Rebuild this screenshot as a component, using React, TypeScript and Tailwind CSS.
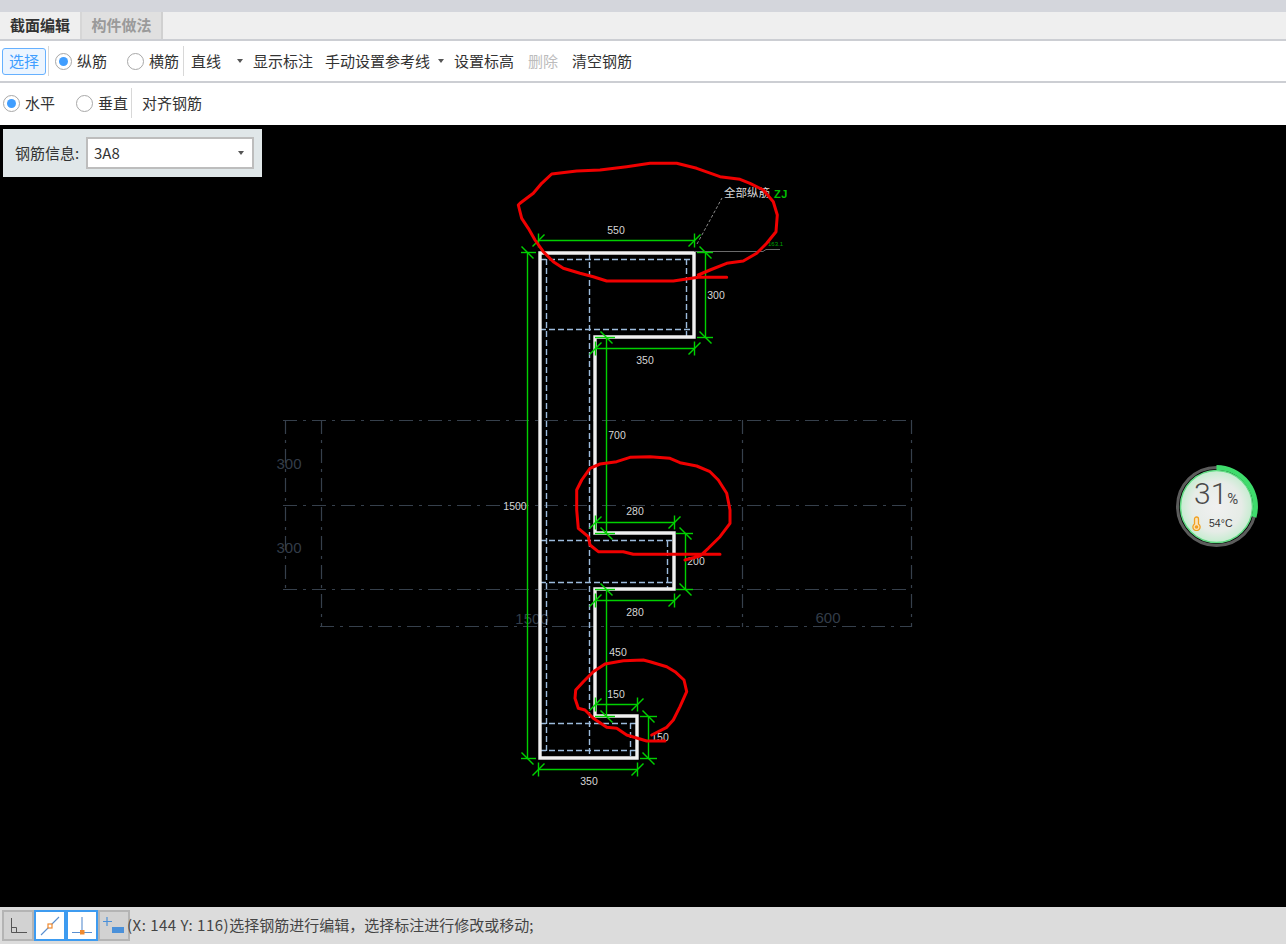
import React from 'react';

const font = { fontFamily: '"Liberation Sans", sans-serif' };

type Pt = [number, number];

// scribbles were traced from 3x crops, so points are crop-space and get mapped back
const mapPts = (pts: Pt[], ox: number, oy: number) =>
  pts.map(([x, y]) => `${(ox + x / 3).toFixed(1)},${(oy + y / 3).toFixed(1)}`).join(' ');

const scribbleTop: Pt[] = [
  [650, 367], [565, 367], [490, 378], [400, 378], [290, 378], [250, 365], [210, 355], [160, 340], [130, 320], [100, 290],
  [75, 255], [55, 220], [35, 190], [25, 150], [30, 145], [70, 115], [95, 85], [125, 57], [200, 48], [270, 45], [350, 35],
  [420, 25], [500, 25], [560, 40], [630, 65], [690, 73], [720, 85], [760, 105], [790, 140], [802, 180], [798, 230],
  [770, 265], [740, 295], [700, 318], [650, 325], [600, 345], [565, 360],
];
const scribbleMid: Pt[] = [
  [555, 330], [600, 318], [625, 295], [660, 260], [690, 220], [690, 180], [680, 130], [655, 90], [630, 65], [590, 48],
  [540, 38], [510, 25], [450, 20], [390, 22], [350, 35], [300, 42], [270, 55], [245, 90], [230, 120], [230, 180],
  [235, 235], [265, 260], [270, 285], [295, 305], [370, 305], [400, 313], [660, 313],
];
const scribbleLow: Pt[] = [
  [425, 285], [470, 262], [490, 240], [510, 200], [530, 155], [522, 120], [495, 95], [470, 80], [420, 65], [400, 60],
  [340, 62], [285, 72], [250, 95], [220, 125], [197, 150], [195, 175], [205, 205], [225, 210], [250, 235], [290, 262],
  [320, 265], [350, 285], [410, 303], [465, 303],
];

const gridH = [
  { y: 420.5, x1: 283, x2: 911 },
  { y: 505.5, x1: 283, x2: 911 },
  { y: 589.5, x1: 283, x2: 911 },
  { y: 626.5, x1: 320, x2: 911 },
];
const gridV = [
  { x: 285.5, y1: 420, y2: 590 },
  { x: 321.5, y1: 420, y2: 627 },
  { x: 742.5, y1: 420, y2: 627 },
  { x: 911.5, y1: 420, y2: 627 },
];
const gridLabels = [
  { t: '300', x: 289, y: 469 },
  { t: '300', x: 289, y: 553 },
  { t: '1500', x: 532, y: 624 },
  { t: '600', x: 828, y: 623 },
];

const stirrups: [number, number, number, number][] = [
  [540, 259.5, 694, 259.5],
  [546.5, 259, 546.5, 751],
  [589.5, 253, 589.5, 758],
  [686.5, 259, 686.5, 337],
  [540, 329.5, 694, 329.5],
  [540, 540.5, 674, 540.5],
  [667.5, 541, 667.5, 590],
  [540, 582.5, 674, 582.5],
  [540, 723.5, 637, 723.5],
  [630.5, 723, 630.5, 758],
  [540, 750.5, 637, 750.5],
];

const hDims = [
  { y: 240.5, x1: 538.5, x2: 694.5 },
  { y: 348.5, x1: 595.5, x2: 694.5 },
  { y: 522.5, x1: 595.5, x2: 674.5 },
  { y: 600.5, x1: 595.5, x2: 674.5 },
  { y: 704.5, x1: 595.5, x2: 637.5 },
  { y: 769.5, x1: 538.5, x2: 637.5 },
];
const vDims = [
  { x: 527.5, y1: 252.5, y2: 758.5, e1: 521, e2: 536 },
  { x: 705.5, y1: 252.5, y2: 337.5, e1: 697, e2: 713 },
  { x: 606.5, y1: 337.5, y2: 533.5, e1: 595, e2: 615 },
  { x: 685.5, y1: 533.5, y2: 589.5, e1: 676, e2: 693 },
  { x: 606.5, y1: 589.5, y2: 716.5, e1: 595, e2: 615 },
  { x: 648.5, y1: 716.5, y2: 758.5, e1: 640, e2: 657 },
];
const dimLabels = [
  { t: '550', x: 616, y: 234 },
  { t: '300', x: 716, y: 299 },
  { t: '350', x: 645, y: 364 },
  { t: '700', x: 617, y: 439 },
  { t: '280', x: 635, y: 515 },
  { t: '200', x: 696, y: 565 },
  { t: '280', x: 635, y: 616 },
  { t: '450', x: 618, y: 656 },
  { t: '150', x: 616, y: 698 },
  { t: '150', x: 660, y: 741 },
  { t: '350', x: 589, y: 785 },
  { t: '1500', x: 515, y: 510 },
];

function Drawing() {
  return (
    <svg className="block w-full h-full" viewBox="0 125 1286 782" style={font}>
      <g stroke="#36404c" strokeWidth="1.2" strokeDasharray="14 6 3 6" fill="none">
        {gridH.map((l) => (
          <line key={l.y} x1={l.x1} x2={l.x2} y1={l.y} y2={l.y} />
        ))}
        {gridV.map((l) => (
          <line key={l.x} x1={l.x} x2={l.x} y1={l.y1} y2={l.y2} />
        ))}
      </g>
      {gridLabels.map((l) => (
        <text key={l.t + l.y} x={l.x} y={l.y} fontSize="15" fill="#333d49" textAnchor="middle">
          {l.t}
        </text>
      ))}

      <g stroke="#9cbbdc" strokeWidth="1.4" strokeDasharray="6 3">
        {stirrups.map(([x1, y1, x2, y2]) => (
          <line key={`${x1}-${y1}-${x2}`} x1={x1} y1={y1} x2={x2} y2={y2} />
        ))}
      </g>

      <path
        d="M540 253H694V337H595V533H674V589H595V716H637V758H540Z"
        fill="none"
        stroke="#f0f0f0"
        strokeWidth="3.4"
      />

      <line x1="694" y1="251.5" x2="763" y2="251.5" stroke="#6a6a6a" strokeWidth="1" />
      <path d="M763 251.5L766 249.5H780" fill="none" stroke="#6a6a6a" strokeWidth="1" />
      <line x1="697" y1="244" x2="722" y2="198" stroke="#8a8a8a" strokeWidth="1" strokeDasharray="3 2" />

      <g stroke="#00d000" strokeWidth="1.4">
        {hDims.map((d) => (
          <g key={d.y}>
            <line x1={d.x1} x2={d.x2} y1={d.y} y2={d.y} />
            <line x1={d.x1} x2={d.x1} y1={d.y - 7} y2={d.y + 7} />
            <line x1={d.x2} x2={d.x2} y1={d.y - 7} y2={d.y + 7} />
            <line x1={d.x1 - 6} y1={d.y + 6} x2={d.x1 + 6} y2={d.y - 6} />
            <line x1={d.x2 - 6} y1={d.y + 6} x2={d.x2 + 6} y2={d.y - 6} />
          </g>
        ))}
        {vDims.map((d) => (
          <g key={d.y1}>
            <line x1={d.x} x2={d.x} y1={d.y1} y2={d.y2} />
            <line x1={d.e1} x2={d.e2} y1={d.y1} y2={d.y1} />
            <line x1={d.e1} x2={d.e2} y1={d.y2} y2={d.y2} />
            <line x1={d.x - 6} y1={d.y1 - 6} x2={d.x + 6} y2={d.y1 + 6} />
            <line x1={d.x - 6} y1={d.y2 - 6} x2={d.x + 6} y2={d.y2 + 6} />
          </g>
        ))}
      </g>

      {dimLabels.map((l) => (
        <text key={l.t + l.x} x={l.x} y={l.y} fontSize="10.5" fill="#d6d6d6" textAnchor="middle">
          {l.t}
        </text>
      ))}

      <text x="724" y="197" fontSize="11.5" fill="#d8d8d8" style={{ fontFamily: '"Noto Sans CJK SC", sans-serif' }}>
        全部纵筋
      </text>
      <text x="774" y="198" fontSize="11" fontWeight="bold" fill="#00c000" letterSpacing="0.5">
        ZJ
      </text>
      <text x="768" y="246" fontSize="6" fill="#00a000">
        163.1
      </text>

      <g fill="none" stroke="#f00000" strokeWidth="3" strokeLinejoin="round" strokeLinecap="round">
        <polyline points={mapPts(scribbleTop, 510, 155)} />
        <polyline points={mapPts(scribbleMid, 500, 450)} />
        <polyline points={mapPts(scribbleLow, 510, 640)} />
      </g>
    </svg>
  );
}

function Radio({ checked, label }: { checked?: boolean; label: string }) {
  return (
    <span className="flex items-center gap-[5px]">
      <span className="w-[17px] h-[17px] rounded-full border border-[#a8a8a8] bg-white flex items-center justify-center">
        {checked && <span className="w-[9px] h-[9px] rounded-full bg-[#409eff]" />}
      </span>
      <span className="text-[15px] text-[#333]">{label}</span>
    </span>
  );
}

function Caret() {
  return <span className="block w-0 h-0 border-x-[3px] border-x-transparent border-t-[4px] border-t-[#555]" />;
}

function Gauge() {
  return (
    <div className="absolute left-[1175px] top-[340px] w-[84px] h-[84px]">
      <svg className="absolute inset-0" width="84" height="84" viewBox="0 0 84 84">
        <defs>
          <radialGradient id="gaugeFill">
            <stop offset="0%" stopColor="#f0f0f0" />
            <stop offset="70%" stopColor="#e6ece7" />
            <stop offset="100%" stopColor="#c6ecd0" />
          </radialGradient>
        </defs>
        <circle cx="41.5" cy="41.5" r="36" fill="url(#gaugeFill)" stroke="#62dd85" strokeWidth="1.5" />
        <circle cx="41.5" cy="41.5" r="39" fill="none" stroke="#5c5c5c" strokeWidth="3" />
        <path d="M41.5 2.5A39 39 0 0 1 79 52" fill="none" stroke="#3fdc6c" strokeWidth="5" />
      </svg>
      <div
        className="absolute left-[19px] top-[11px] flex items-baseline text-[#4a4a4a]"
        style={{ fontFamily: 'Roboto, sans-serif' }}
      >
        <span className="text-[30px] leading-[36px] font-light">31</span>
        <span className="text-[15px] leading-none">%</span>
      </div>
      <div className="absolute left-[17px] top-[51px] flex items-center gap-[8px]">
        <svg width="9" height="15" viewBox="0 0 9 15">
          <path
            d="M2.5 8V3a2 2 0 0 1 4 0v5a3.6 3.6 0 1 1-4 0Z"
            fill="#fbe3b8"
            stroke="#f0a020"
            strokeWidth="1.3"
          />
          <circle cx="4.5" cy="11" r="1.8" fill="#f0a020" />
        </svg>
        <span className="text-[10.5px] leading-none text-[#333]" style={font}>
          54°C
        </span>
      </div>
    </div>
  );
}

function StatusIcon({ active, children }: { active?: boolean; children: React.ReactNode }) {
  return (
    <div
      className={`w-[32px] h-[31px] flex items-center justify-center border-2 ${
        active ? 'bg-white border-[#3d9bf0]' : 'bg-[#d2d2d2] border-[#b4b4b4]'
      }`}
    >
      {children}
    </div>
  );
}

export default function App() {
  return (
    <div
      className="w-[1286px] h-[944px] flex flex-col overflow-hidden bg-white"
      style={{ fontFamily: '"Noto Sans CJK SC", "Liberation Sans", sans-serif' }}
    >
      <div className="h-[12px] bg-[#d4d6dc]" />

      <div className="h-[29px] flex bg-[#efefef] border-b-2 border-[#ccced3]">
        <div className="w-[82px] flex items-center justify-center text-[15px] font-bold text-[#333] border-r-2 border-[#d6d6d6]">
          截面编辑
        </div>
        <div className="w-[81px] flex items-center justify-center text-[15px] font-bold text-[#9a9a9a] bg-[#e0e0e0] border-r-2 border-[#d0d0d0]">
          构件做法
        </div>
      </div>

      <div className="h-[42px] flex items-center pl-[2px] border-b-2 border-[#ccced3] text-[15px] text-[#333]">
        <div className="w-[44px] h-[27px] rounded-[3px] border border-[#66b1ff] bg-[#ecf5ff] text-[#409eff] flex items-center justify-center">
          选择
        </div>
        <div className="w-px h-[30px] bg-[#d8d8d8] ml-[2px] mr-[6px]" />
        <Radio checked label="纵筋" />
        <div className="ml-[20px]">
          <Radio label="横筋" />
        </div>
        <div className="w-px h-[30px] bg-[#d8d8d8] ml-[4px] mr-[7px]" />
        <div className="w-[46px]">直线</div>
        <Caret />
        <div className="ml-[10px] w-[60px]">显示标注</div>
        <div className="ml-[12px] w-[105px]">手动设置参考线</div>
        <div className="ml-[8px]">
          <Caret />
        </div>
        <div className="ml-[10px] w-[60px]">设置标高</div>
        <div className="ml-[14px] w-[30px] text-[#bcbcbc]">删除</div>
        <div className="ml-[14px] w-[60px]">清空钢筋</div>
      </div>

      <div className="h-[42px] flex items-center pl-[3px] pb-[2px] text-[15px] text-[#333]">
        <Radio checked label="水平" />
        <div className="ml-[21px]">
          <Radio label="垂直" />
        </div>
        <div className="w-px h-[30px] bg-[#d8d8d8] ml-[3px] mr-[10px]" />
        <div>对齐钢筋</div>
      </div>

      <div className="relative h-[782px] bg-black">
        <Drawing />
        <div className="absolute left-[3px] top-[4px] w-[259px] h-[48px] bg-[#e0e7e9] flex items-center pl-[12px] text-[15px] text-[#333]">
          <span className="w-[71px]">钢筋信息:</span>
          <div className="w-[168px] h-[32px] bg-white border-2 border-[#bdbdbd] flex items-center justify-between pl-[6px] pr-[8px]">
            <span>3A8</span>
            <Caret />
          </div>
        </div>
        <Gauge />
      </div>

      <div className="flex-1 bg-[#dcdcdc] flex items-center pl-[2px] gap-0">
        <StatusIcon>
          <svg width="20" height="18" viewBox="0 0 20 18" fill="none" stroke="#555" strokeWidth="1">
            <path d="M3.5 1V15.5H19" />
            <path d="M3.5 10.5H8.5V15.5" />
          </svg>
        </StatusIcon>
        <StatusIcon active>
          <svg width="22" height="22" viewBox="0 0 22 22" fill="none">
            <path d="M2 20L20 2" stroke="#5a8fd0" strokeWidth="1.1" />
            <rect x="9" y="9" width="4" height="4" fill="#fff" stroke="#f08a30" strokeWidth="1.2" />
          </svg>
        </StatusIcon>
        <StatusIcon active>
          <svg width="22" height="22" viewBox="0 0 22 22" fill="none">
            <path d="M1 17.5H21M11 2V17" stroke="#5a8fd0" strokeWidth="1.1" />
            <rect x="9" y="15" width="4.5" height="4.5" fill="#f08a30" />
          </svg>
        </StatusIcon>
        <StatusIcon>
          <svg width="24" height="22" viewBox="0 0 24 22" fill="none">
            <path d="M5 2V11M1 6.5H10" stroke="#4a90d9" strokeWidth="1.2" />
            <rect x="10" y="12" width="12" height="6" fill="#4a90d9" />
          </svg>
        </StatusIcon>
        <span className="ml-[-3px] text-[15px] text-[#444]">
          <span className="tracking-[0.5px]">(X: 144 Y: 116)</span>选择钢筋进行编辑，选择标注进行修改或移动;
        </span>
      </div>
    </div>
  );
}
